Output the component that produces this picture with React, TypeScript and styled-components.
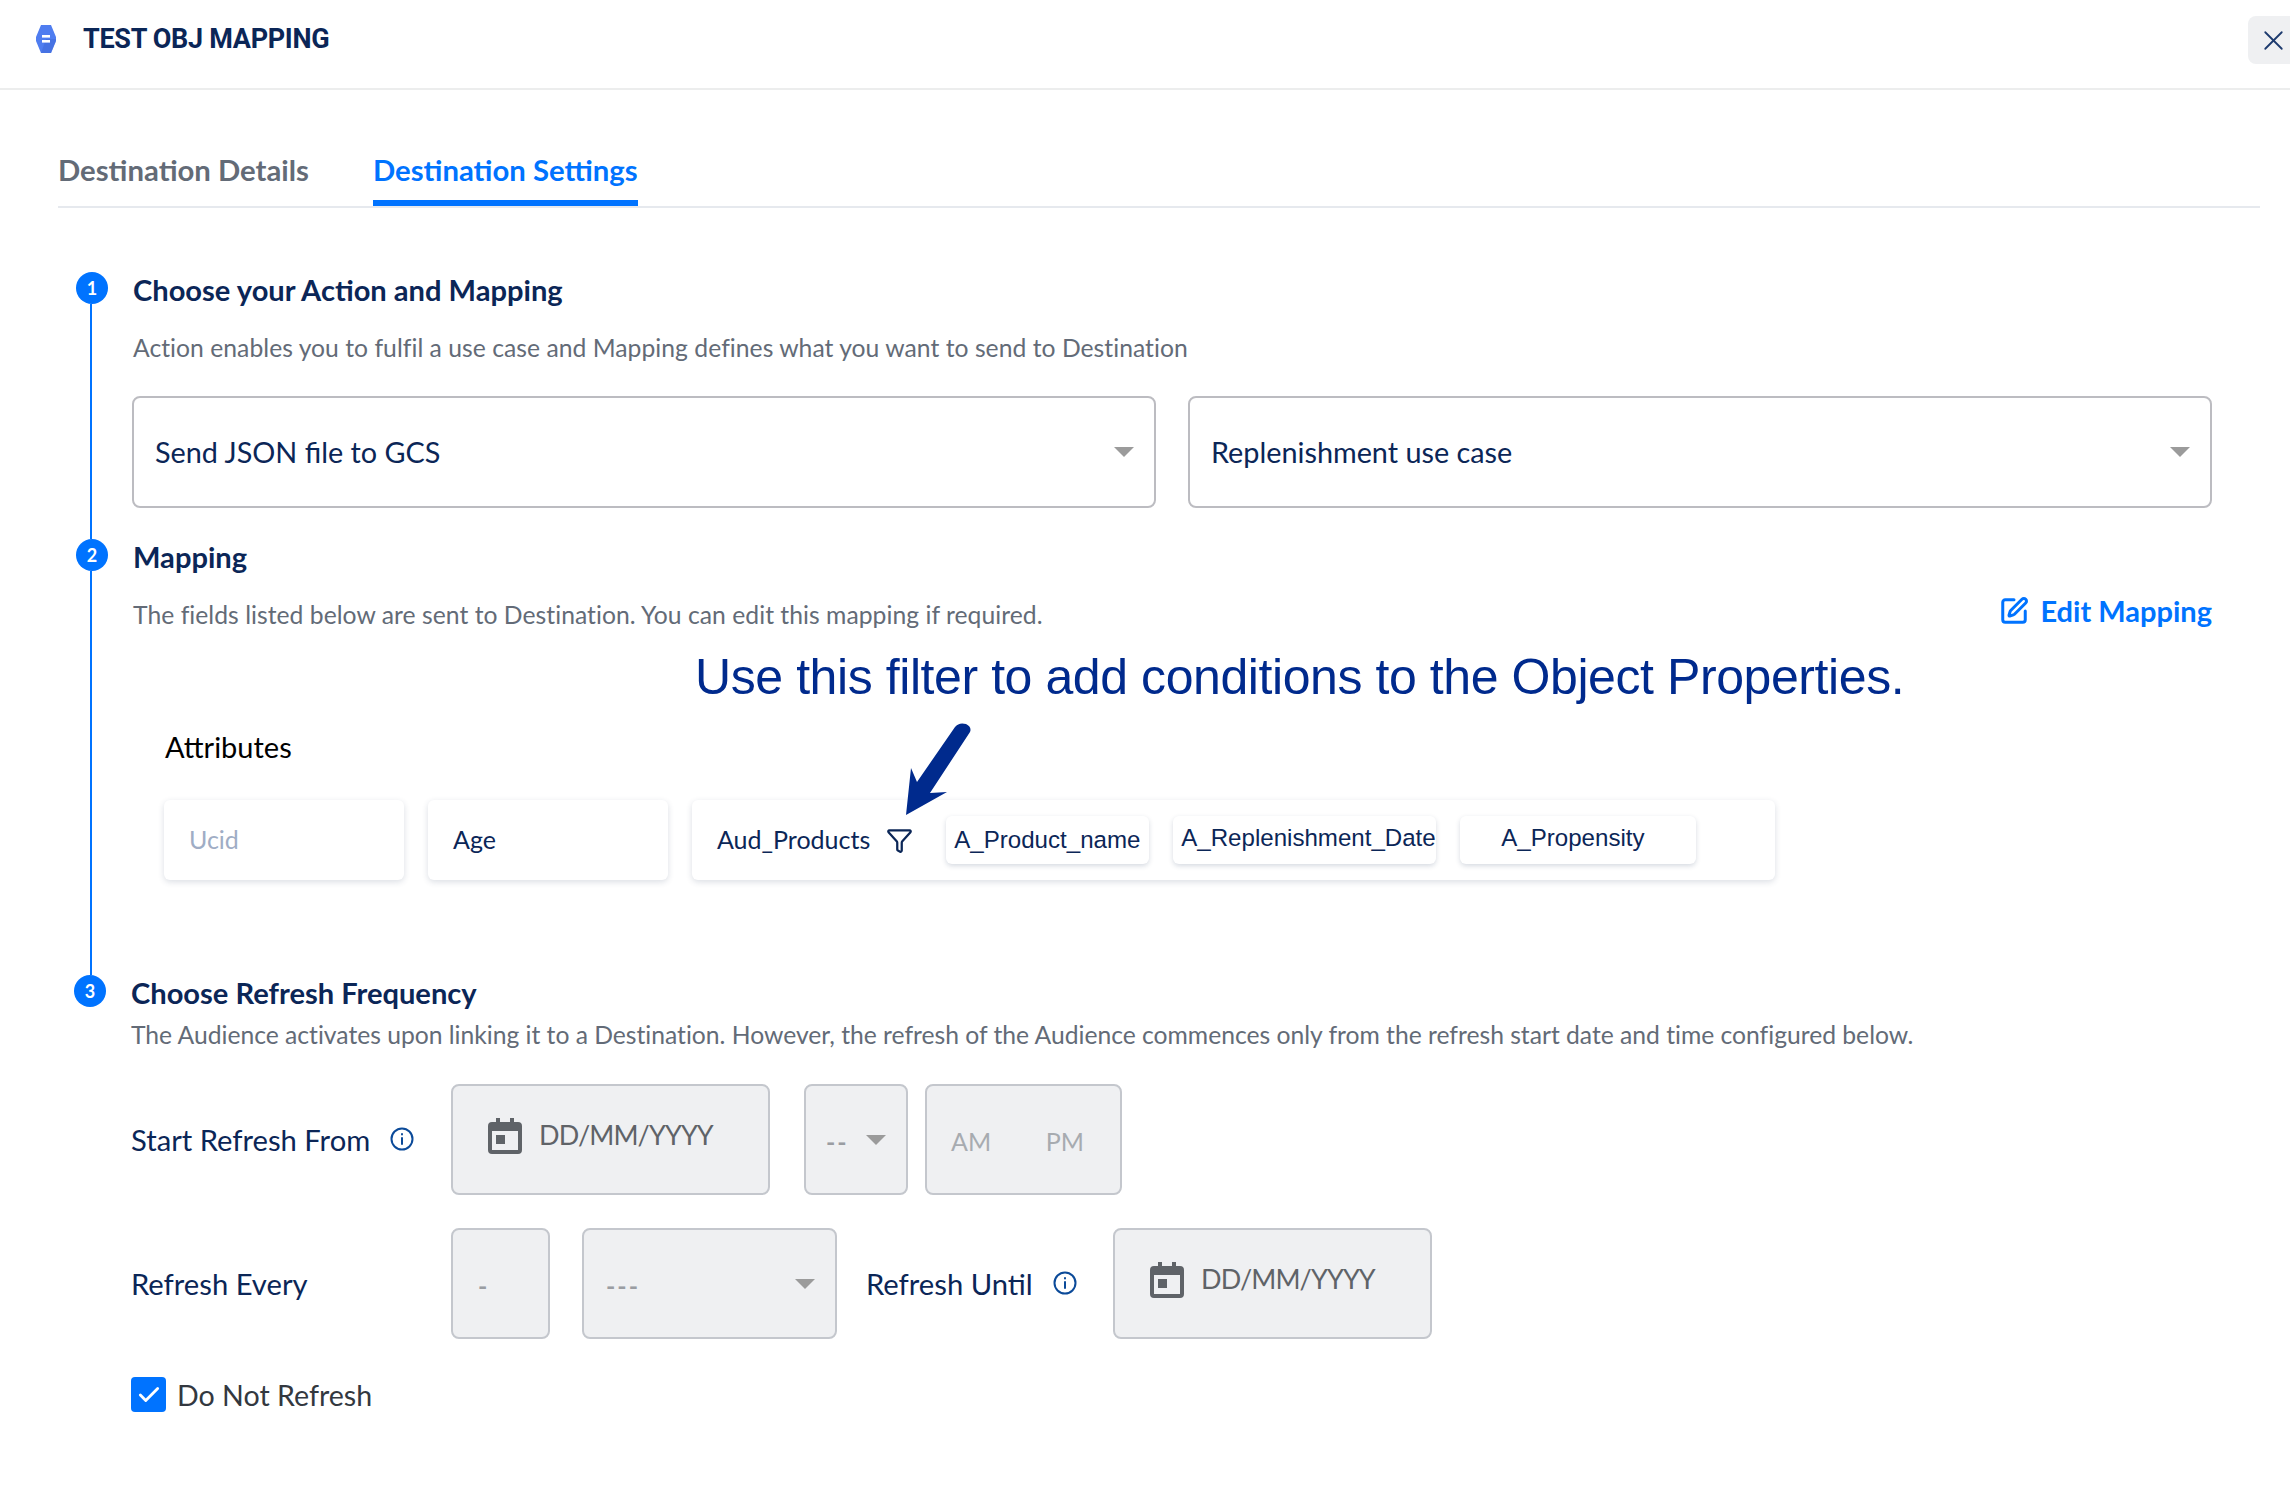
import React from "react";
import styled, { createGlobalStyle } from "styled-components";
import { Check, Funnel, SquarePen, X } from "lucide-react";

const Global = createGlobalStyle`
  html, body { margin: 0; padding: 0; background: #fff; }
  body { font-family: "Lato", "Noto Sans", sans-serif; }
`;
const Page = styled.div`width: 2290px; height: 1502px; overflow: hidden; position: relative; background: #fff;`;
const Header = styled.header`height: 88px; border-bottom: 2px solid #eceded; display: flex; align-items: center; padding-left: 35px; position: relative;`;
const Title = styled.h1`margin: 0 0 0 26px; font: 700 27px "Roboto", sans-serif; letter-spacing: -0.3px; color: #0b2657; position: relative; top: -5px;`;
const LogoSvg = styled.svg`width: 22px; height: 28px; position: relative; top: -5px;`;
const CloseBtn = styled.button`position: absolute; right: 0; top: 16px; width: 42px; height: 48px; border: 0; padding: 0 0 0 8px; border-radius: 8px 0 0 8px; background: #eff0f2; color: #1d3a6e; display: flex; align-items: center; justify-content: center;`;
const Tabs = styled.nav`margin: 0 30px 0 58px; height: 118px; box-sizing: border-box; border-bottom: 2px solid #e6e9ee; display: flex; align-items: flex-end; gap: 64px;`;
const Tab = styled.div<{ $active?: boolean }>`
  font-size: 29.3px; font-weight: 700; line-height: 36px; padding-top: 6px; box-sizing: border-box; height: 60px;
  color: ${p => (p.$active ? "#0073ff" : "#636b77")};
  border-bottom: 6px solid ${p => (p.$active ? "#0073ff" : "transparent")};
`;
const Steps = styled.main`padding: 64px 0 0 76px; width: 2136px; box-sizing: border-box;`;
const Step = styled.section<{ $h: number; $shift?: number }>`display: flex; gap: 25px; height: ${p => p.$h}px; margin-left: ${p => p.$shift ?? 0}px;`;
const Rail = styled.div`width: 32px; display: flex; flex-direction: column; align-items: flex-start; flex: none;`;
const Circle = styled.div`width: 32px; height: 32px; border-radius: 50%; flex: none; background: #0073ff; color: #fff; font: 700 18px/32px "Lato", sans-serif; text-align: center;`;
const Connector = styled.div`width: 2px; flex: 1; margin-left: 14px; background: #0073ff;`;
const Content = styled.div`flex: 1; min-width: 0;`;
const Heading = styled.h2`margin: 0; font-size: 29.1px; font-weight: 700; line-height: 36px; color: #0b2657;`;
const Sub = styled.p<{ $mt?: number; $ls?: number }>`margin: ${p => p.$mt ?? 0}px 0 0; font-size: 24.7px; line-height: 34px; letter-spacing: ${p => p.$ls ?? 0}px; color: #636b77;`;
const SelectRow = styled.div`display: flex; gap: 32px; margin: 31px 0 0 -1px; width: 2080px;`;
const Select = styled.div`flex: 1; height: 112px; box-sizing: border-box; border: 2px solid #bcbcc1; border-radius: 8px; padding: 0 20px 0 21px; display: flex; align-items: center; justify-content: space-between; font-size: 28.8px; color: #0b2657;`;
const Caret = styled.span<{ $w?: number; $h?: number }>`width: 0; height: 0; flex: none; border-left: ${p => (p.$w ?? 20) / 2}px solid transparent; border-right: ${p => (p.$w ?? 20) / 2}px solid transparent; border-top: ${p => p.$h ?? 10}px solid #9b9b9b;`;
const MapHead = styled.div`display: flex; align-items: flex-start; justify-content: space-between; width: 2079px; margin-top: 23px;`;
const EditLink = styled.a`display: flex; align-items: center; gap: 11px; color: #0073ff; font-size: 29px; font-weight: 700; line-height: 36px; margin-top: -5px;`;
const Callout = styled.div`margin: 15px 0 0 562px; font: 400 50px/60px "Liberation Sans", sans-serif; letter-spacing: -0.42px; color: #002a8d; white-space: nowrap;`;
const AttrLabel = styled.div`margin: 22px 0 0 32px; font-size: 29px; line-height: 36px; color: #000;`;
const CardRow = styled.div`display: flex; gap: 24px; margin: 35px 0 0 31px; position: relative;`;
const Card = styled.div<{ $w: number; $muted?: boolean }>`width: ${p => p.$w}px; height: 80px; flex: none; box-sizing: border-box; border-radius: 6px; background: #fff; box-shadow: 0 2px 6px rgba(30, 50, 90, .16); display: flex; align-items: center; padding-left: 25px; font-size: 25px; color: ${p => (p.$muted ? "#9fadc5" : "#0b2657")};`;
const CardName = styled.span`margin-bottom: 2px;`;
const FunnelBox = styled.span`margin-left: 16px; color: #0b2657; display: flex; margin-right: 33px;`;
const Chip = styled.div<{ $w: number; $pl: number; $up?: number }>`width: ${p => p.$w}px; height: 48px; margin-right: 24px; flex: none; box-sizing: border-box; border-radius: 6px; background: #fff; box-shadow: 0 2px 5px rgba(30, 50, 90, .18); display: flex; align-items: center; padding: 0 0 ${p => p.$up ?? 0}px ${p => p.$pl}px; white-space: nowrap; font: 400 24.1px "Liberation Sans", sans-serif; color: #0b2657;`;
const ArrowSvg = styled.svg`position: absolute; left: 715px; top: -84px; width: 100px; height: 110px;`;
const Row = styled.div<{ $mt: number }>`display: flex; align-items: flex-start; margin-top: ${p => p.$mt}px;`;
const FieldLabel = styled.div<{ $w: number; $ml?: number }>`width: ${p => p.$w}px; margin-left: ${p => p.$ml ?? 0}px; flex: none; height: 111px; padding-bottom: 1px; box-sizing: border-box; display: flex; align-items: center; gap: 20px; font-size: 29.2px; color: #0b2657;`;
const Field = styled.div<{ $w: number; $ml?: number }>`width: ${p => p.$w}px; height: 111px; margin-left: ${p => p.$ml ?? 0}px; flex: none; box-sizing: border-box; background: #eff0f2; border: 2px solid #c4c7cd; border-radius: 8px; color: #9a9da2; font-size: 25px; display: flex; align-items: center;`;
const DateField = styled(Field)`font-size: 27px; letter-spacing: -0.9px; color: #5f6368; align-items: flex-start; padding: 32px 0 0 35px; gap: 17px;`;
const DateIcon = styled.svg`width: 34px; height: 36px; flex: none;`;
const CheckRow = styled.label`display: flex; align-items: center; gap: 11px; margin-top: 38px; font-size: 28.6px; color: #33383f;`;
const CheckBox = styled.span`width: 35px; height: 35px; border-radius: 4px; background: #0073ff; color: #fff; display: flex; align-items: center; justify-content: center; flex: none;`;
const Spread = styled.div<{ $pad: string }>`display: flex; align-items: center; justify-content: space-between; width: 100%; padding: ${p => p.$pad};`;
const Dashes = styled.span`font-weight: 700; letter-spacing: 2px; position: relative; top: 1px;`;
const Meridiem = styled.span`color: #a7abb0; position: relative; top: 1px;`;

const Info = () => (
  <svg width="24" height="24" viewBox="0 0 24 24" fill="none" stroke="#0b4a99" strokeWidth="2" strokeLinecap="round">
    <circle cx="12" cy="12" r="10.5" /><path d="M12 11v6M12 7v.4" />
  </svg>
);
const Calendar = () => (
  <DateIcon viewBox="0 0 34 36">
    <path fill="#5f6368" d="M8 0h4v4h10V0h4v4h4a4 4 0 0 1 4 4v24a4 4 0 0 1-4 4H4a4 4 0 0 1-4-4V8a4 4 0 0 1 4-4h4zM4 13v19h26V13z" />
    <rect x="8" y="17" width="9" height="9" fill="#5f6368" />
  </DateIcon>
);

export default function App() {
  return (
    <Page>
      <Global />
      <Header>
        <LogoSvg viewBox="0 0 22 28">
          <path fill="#4f7df0" d="M6 0h10l5 12v4l-5 12H6L1 16v-4z" />
          <path fill="#3f69d8" d="M11 14h10v2l-5 12H6z" opacity=".55" />
          <rect x="7" y="10" width="8" height="2.6" fill="#fff" /><rect x="7" y="15" width="8" height="2.6" fill="#fff" />
        </LogoSvg>
        <Title>TEST OBJ MAPPING</Title>
        <CloseBtn aria-label="Close"><X size={33} strokeWidth={1.3} /></CloseBtn>
      </Header>
      <Tabs>
        <Tab>Destination Details</Tab>
        <Tab $active>Destination Settings</Tab>
      </Tabs>
      <Steps>
        <Step $h={267}>
          <Rail><Circle>1</Circle><Connector /></Rail>
          <Content>
            <Heading>Choose your Action and Mapping</Heading>
            <Sub $mt={23} $ls={0.03}>Action enables you to fulfil a use case and Mapping defines what you want to send to Destination</Sub>
            <SelectRow>
              <Select>Send JSON file to GCS<Caret /></Select>
              <Select>Replenishment use case<Caret /></Select>
            </SelectRow>
          </Content>
        </Step>
        <Step $h={436}>
          <Rail><Circle>2</Circle><Connector /></Rail>
          <Content>
            <Heading>Mapping</Heading>
            <MapHead>
              <Sub $ls={0.035}>The fields listed below are sent to Destination. You can edit this mapping if required.</Sub>
              <EditLink><SquarePen size={30} strokeWidth={2.4} />Edit Mapping</EditLink>
            </MapHead>
            <Callout>Use this filter to add conditions to the Object Properties.</Callout>
            <AttrLabel>Attributes</AttrLabel>
            <CardRow>
              <Card $w={240} $muted><CardName>Ucid</CardName></Card>
              <Card $w={240}><CardName>Age</CardName></Card>
              <Card $w={1083}>
                <CardName>Aud_Products</CardName>
                <FunnelBox><Funnel size={27} strokeWidth={2} /></FunnelBox>
                <Chip $w={203} $pl={8}>A_Product_name</Chip>
                <Chip $w={263} $pl={8} $up={4}>A_Replenishment_Date</Chip>
                <Chip $w={236} $pl={41} $up={4}>A_Propensity</Chip>
              </Card>
              <ArrowSvg viewBox="0 0 100 110">
                <path fill="#002a8d" d="M76 11Q80 6 87 8Q93 11 91 16L51 77L68 76L27 99L32 52L38 66Z" />
              </ArrowSvg>
            </CardRow>
          </Content>
        </Step>
        <Step $h={440} $shift={-2}>
          <Rail><Circle>3</Circle></Rail>
          <Content>
            <Heading>Choose Refresh Frequency</Heading>
            <Sub $mt={7} $ls={-0.017}>The Audience activates upon linking it to a Destination. However, the refresh of the Audience commences only from the refresh start date and time configured below.</Sub>
            <Row $mt={32}>
              <FieldLabel $w={320}>Start Refresh From <Info /></FieldLabel>
              <DateField $w={319}><Calendar />DD/MM/YYYY</DateField>
              <Field $w={104} $ml={34}>
                <Spread $pad="0 20px"><Dashes>--</Dashes><Caret $w={20} $h={10} /></Spread>
              </Field>
              <Field $w={197} $ml={17}>
                <Spread $pad="0 36px 0 24px"><Meridiem>AM</Meridiem><Meridiem>PM</Meridiem></Spread>
              </Field>
            </Row>
            <Row $mt={33}>
              <FieldLabel $w={320}>Refresh Every</FieldLabel>
              <Field $w={99}><Spread $pad="0 0 0 25px"><Dashes>-</Dashes></Spread></Field>
              <Field $w={255} $ml={32}>
                <Spread $pad="0 20px 0 22px"><Dashes>---</Dashes><Caret $w={20} $h={10} /></Spread>
              </Field>
              <FieldLabel $w={247} $ml={29}>Refresh Until <Info /></FieldLabel>
              <DateField $w={319} $ml={0}><Calendar />DD/MM/YYYY</DateField>
            </Row>
            <CheckRow><CheckBox><Check size={26} strokeWidth={2.6} /></CheckBox>Do Not Refresh</CheckRow>
          </Content>
        </Step>
      </Steps>
    </Page>
  );
}
